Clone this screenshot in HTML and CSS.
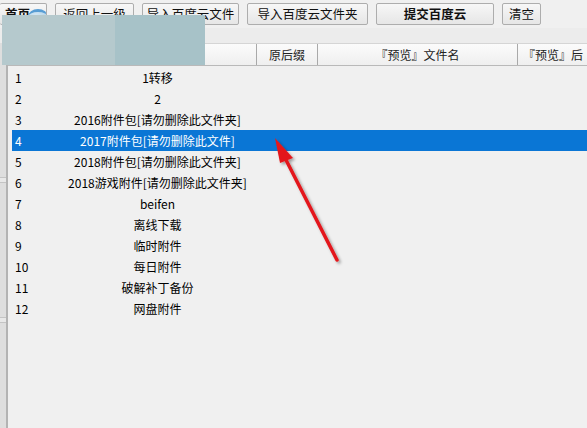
FILE: index.html
```html
<!DOCTYPE html>
<html lang="zh-CN">
<head>
<meta charset="utf-8">
<title>百度云</title>
<link rel="stylesheet" href="styles.css">
</head>
<body>
<div class="app">
  <div class="toolbar">
    <button class="btn b1">首页<span class="logo"></span></button>
    <button class="btn b2">返回上一级</button>
    <button class="btn b3">导入百度云文件</button>
    <button class="btn b4">导入百度云文件夹</button>
    <button class="btn b5 bold">提交百度云</button>
    <button class="btn b6">清空</button>
  </div>
  <div class="band"></div>
  <div class="main">
    <div class="strip"><span class="notch n1"></span><span class="notch n2"></span></div>
    <div class="table">
      <div class="thead">
        <div class="th c-num"></div>
        <div class="th c-name"></div>
        <div class="th c-ext">原后缀</div>
        <div class="th c-prev">『预览』文件名</div>
        <div class="th c-prev2">『预览』后</div>
      </div>
      <div class="tbody">
        <div class="row"><span class="c-num">1</span><span class="c-name">1转移</span></div>
        <div class="row"><span class="c-num">2</span><span class="c-name">2</span></div>
        <div class="row"><span class="c-num">3</span><span class="c-name">2016附件包[请勿删除此文件夹]</span></div>
        <div class="row sel"><span class="c-num">4</span><span class="c-name">2017附件包[请勿删除此文件]</span></div>
        <div class="row"><span class="c-num">5</span><span class="c-name">2018附件包[请勿删除此文件夹]</span></div>
        <div class="row"><span class="c-num">6</span><span class="c-name">2018游戏附件[请勿删除此文件夹]</span></div>
        <div class="row"><span class="c-num">7</span><span class="c-name">beifen</span></div>
        <div class="row"><span class="c-num">8</span><span class="c-name">离线下载</span></div>
        <div class="row"><span class="c-num">9</span><span class="c-name">临时附件</span></div>
        <div class="row"><span class="c-num">10</span><span class="c-name">每日附件</span></div>
        <div class="row"><span class="c-num">11</span><span class="c-name">破解补丁备份</span></div>
        <div class="row"><span class="c-num">12</span><span class="c-name">网盘附件</span></div>
      </div>
    </div>
  </div>
  <div class="blur"><span class="blur-a"></span><span class="blur-b"></span></div>
  <svg class="arrow" width="587" height="428" viewBox="0 0 587 428">
    <defs>
      <filter id="sh" x="-20%" y="-20%" width="140%" height="140%">
        <feDropShadow dx="2" dy="2" stdDeviation="1.5" flood-color="#000" flood-opacity="0.35"/>
      </filter>
    </defs>
    <g filter="url(#sh)">
      <line x1="337" y1="260" x2="284" y2="156" stroke="#e3191c" stroke-width="3.5" stroke-linecap="round"/>
      <polygon points="275,138 293,158 280,163" fill="#e3191c"/>
    </g>
  </svg>
</div>
</body>
</html>
```

FILE: styles.css
```css
* { box-sizing: border-box; }
html, body { margin: 0; padding: 0; }
body {
  width: 587px;
  height: 428px;
  overflow: hidden;
  background: #f0f0f0;
  font-family: "Noto Sans CJK SC", "Liberation Sans", sans-serif;
  font-size: 12px;
  color: #000;
}
.app { position: relative; width: 587px; height: 428px; overflow: hidden; }

.toolbar {
  height: 28px;
  display: flex;
  gap: 8px;
  padding-top: 3px;
  background: #f0f0f0;
}
.btn {
  height: 22px;
  padding: 0;
  border: 1px solid #adadad;
  border-radius: 2px;
  background: linear-gradient(#f7f7f7, #e6e6e6);
  font-family: "Noto Sans CJK SC", sans-serif;
  font-size: 12.5px;
  color: #111;
  line-height: 20px;
  position: relative;
  flex: none;
}
.bold { font-weight: bold; }
.b1 { width: 47px; text-align: left; padding-left: 5px; border-left: none; font-weight: bold; overflow: hidden; }
.b2 { width: 79px; }
.b3 { width: 97px; }
.b4 { width: 121px; }
.b5 { width: 118px; }
.b6 { width: 39px; }
.logo {
  position: absolute;
  right: -2px;
  top: 5px;
  width: 20px;
  height: 16px;
  border-radius: 50%;
  border-top: 3px solid #3d8fcf;
  background: radial-gradient(circle at 40% 30%, #cfe6f5, #9fc6e0);
  opacity: 0.85;
}

.band { height: 15px; background: #ececec; }

.main { display: flex; height: 385px; }
.strip {
  width: 8px;
  flex: none;
  background: #dedede;
  border-right: 2px solid #b3b3b3;
  position: relative;
}
.notch {
  position: absolute;
  left: 0;
  width: 6px;
  height: 6px;
  border-top: 1px solid #c4c4c4;
  border-bottom: 1px solid #c4c4c4;
  background: #e8e8e8;
}
.n1 { top: 134px; }
.n2 { top: 274px; }

.table { flex: 1; display: flex; flex-direction: column; min-width: 0; }
.thead {
  height: 23px;
  display: flex;
  border-top: 1px solid #d5d5d5;
  border-bottom: 1px solid #b9b9b9;
  background: linear-gradient(#fbfbfb, #efefef);
}
.th {
  flex: none;
  height: 21px;
  line-height: 21px;
  text-align: center;
  border-right: 1px solid #a9a9a9;
  color: #222;
  white-space: nowrap;
  overflow: hidden;
}
.thead .c-num { width: 50px; }
.thead .c-name { width: 199px; }
.thead .c-ext { width: 61px; }
.thead .c-prev { width: 200px; }
.thead .c-prev2 { flex: 1; text-align: left; padding-left: 5px; border-right: none; }

.tbody { padding: 1px 0 0 4px; }
.row {
  height: 21px;
  line-height: 21px;
  display: flex;
  white-space: nowrap;
}
.row .c-num { width: 46px; padding-left: 3px; }
.row .c-name { width: 199px; text-align: center; }
.row.sel { background: #0a76d5; color: #fff; }

.blur {
  position: absolute;
  left: 2px;
  top: 15px;
  width: 203px;
  height: 50px;
  display: flex;
}
.blur-a { width: 113px; background: #b5c9cd; }
.blur-b { flex: 1; background: #a7c2c8; }

.arrow { position: absolute; left: 0; top: 0; pointer-events: none; }
```
